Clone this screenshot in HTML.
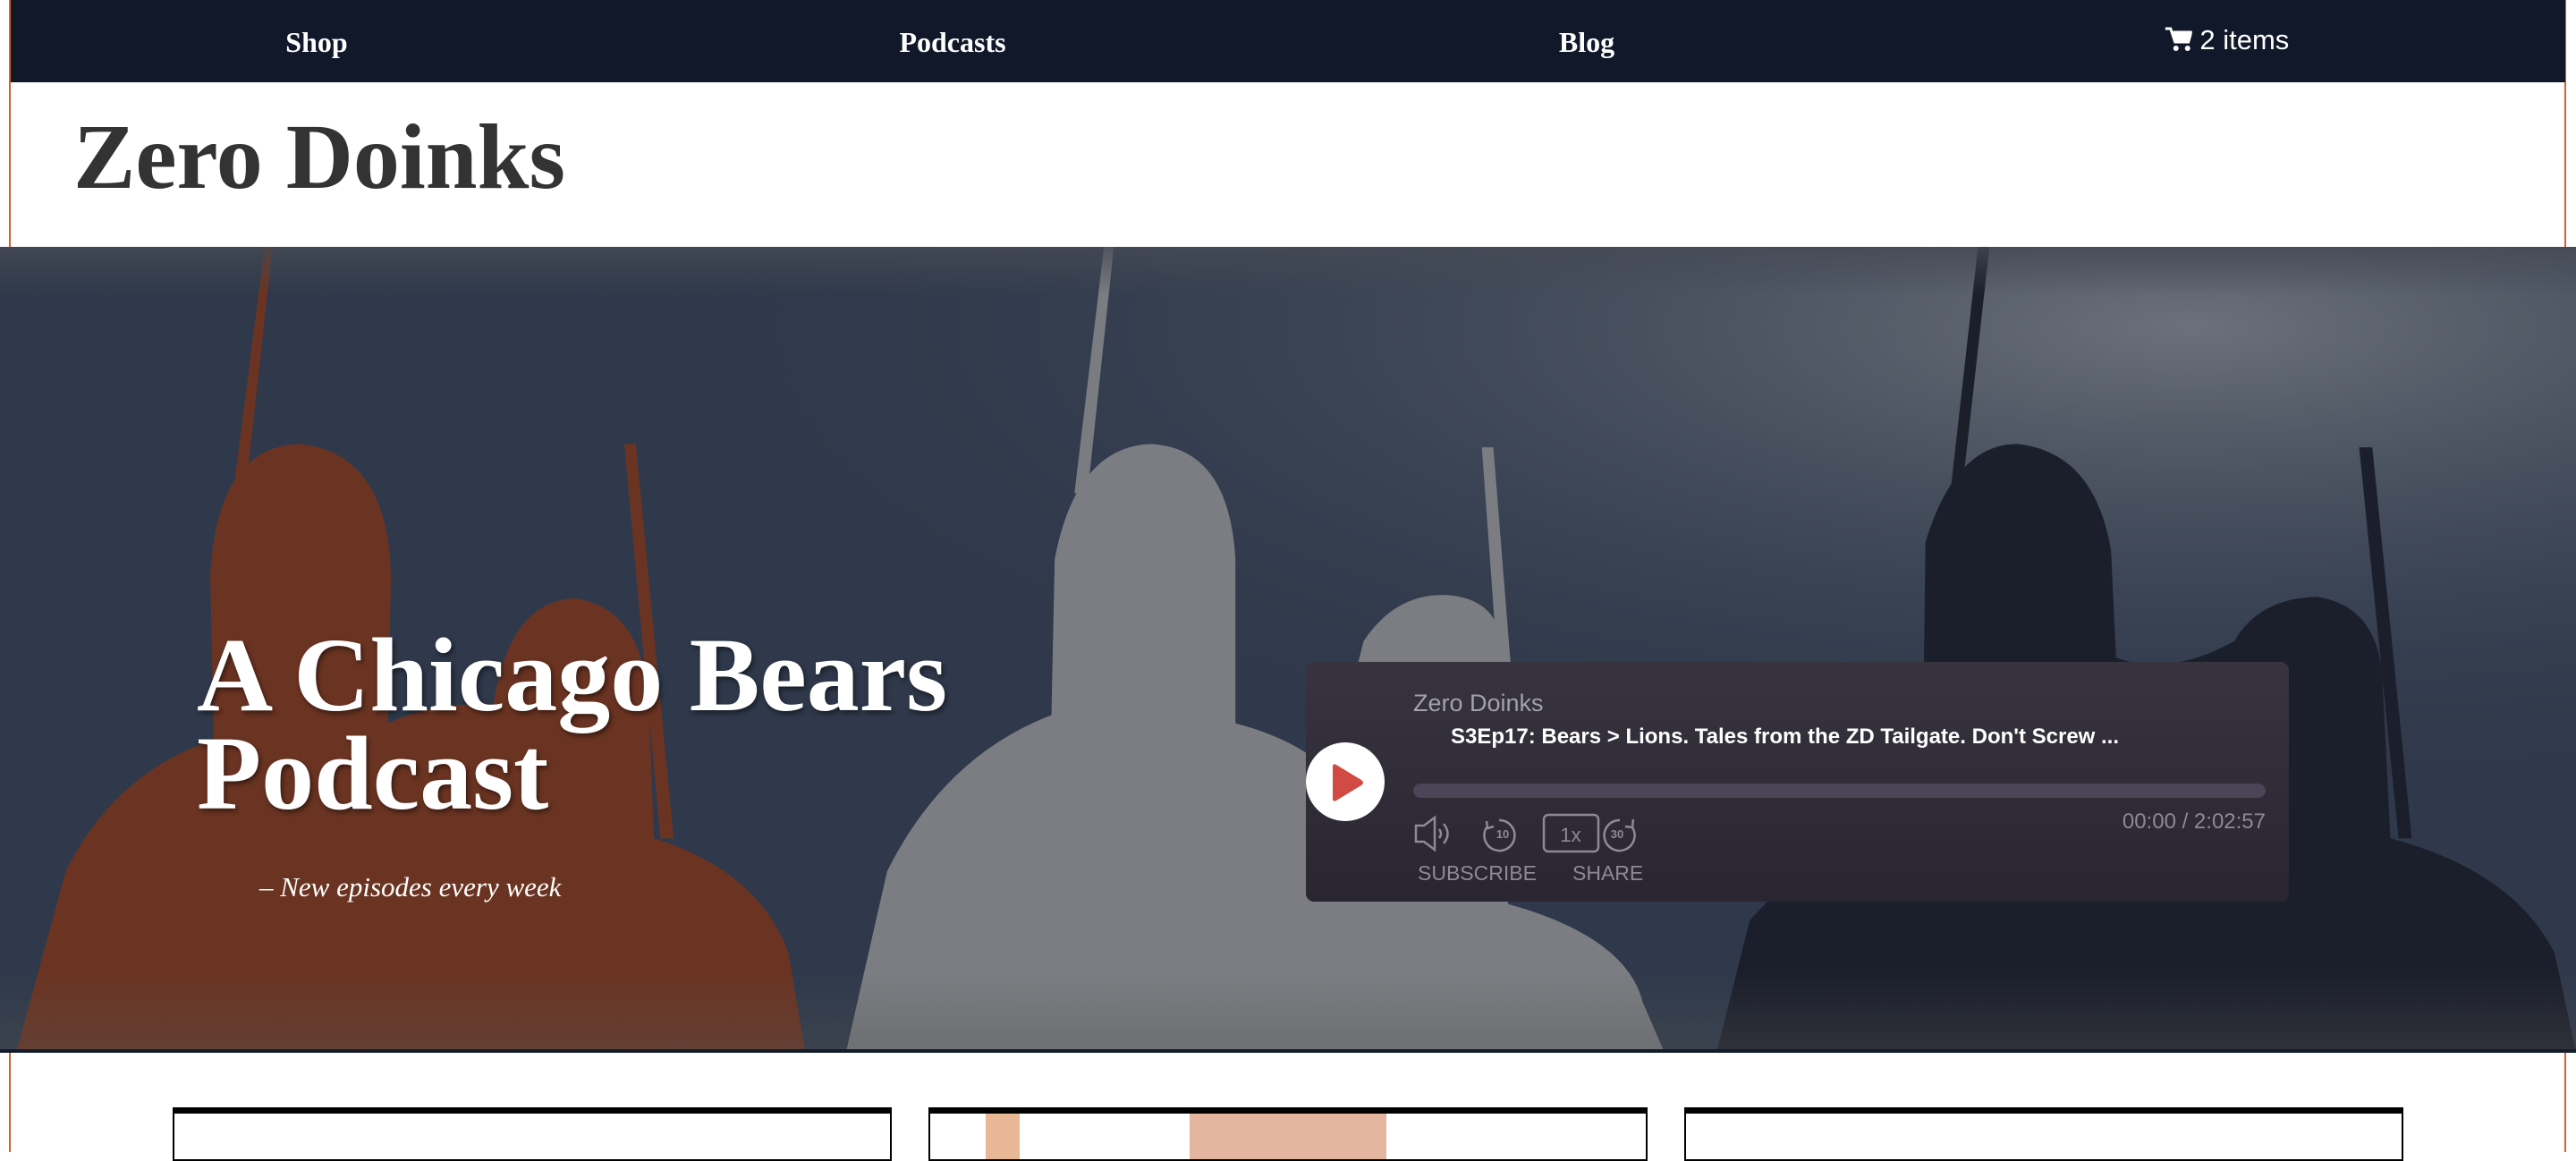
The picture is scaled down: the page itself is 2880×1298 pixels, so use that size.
<!DOCTYPE html>
<html><head><meta charset="utf-8"><style>
*{margin:0;padding:0;box-sizing:border-box}
body{width:2880px;height:1288px;overflow:hidden;background:#fff;position:relative;font-family:"Liberation Sans",sans-serif}
.vl{position:absolute;top:0;width:2px;height:1288px;background:#d4622a}
nav{position:absolute;left:12px;top:0;width:2856px;height:92px;background:#101829}
nav span{position:absolute;top:29px;color:#fff;font-family:"Liberation Serif",serif;font-weight:bold;font-size:32px;transform:translateX(-50%)}
.logo{position:absolute;left:82px;top:124px;font-family:"Liberation Serif",serif;font-weight:bold;font-size:104px;color:#333;letter-spacing:0px;line-height:1}
.hero{position:absolute;left:0;top:276px;width:2880px;height:900px;overflow:hidden;background:#2f394b}
.title{position:absolute;left:220px;top:424px;font-family:"Liberation Serif",serif;font-weight:bold;font-size:118px;line-height:110px;color:#fff;text-shadow:2px 3px 6px rgba(0,0,0,.5)}
.sub{position:absolute;left:290px;top:698px;font-family:"Liberation Serif",serif;font-style:italic;font-size:31px;color:#fff}
.player{position:absolute;left:1460px;top:740px;width:1099px;height:268px;border-radius:9px;background:linear-gradient(#37333f,#2a2631);color:#a19fa8}
.card{position:absolute;top:1238px;width:804px;height:60px;border:2px solid #000;border-top:7px solid #000;background:#fff}
</style></head><body>
<div class="vl" style="left:10px"></div><div class="vl" style="left:2867px"></div>
<nav>
<span style="left:342px">Shop</span>
<span style="left:1053px">Podcasts</span>
<span style="left:1762px">Blog</span>
<span style="left:2478px;font-family:'Liberation Sans',sans-serif;font-weight:normal;font-size:31px;top:27px"><svg width="30" height="28" viewBox="0 0 30 28" style="vertical-align:-3px"><path d="M0 2h6l5 15h15l3-11H9" fill="none" stroke="#fff" stroke-width="3"/><path d="M8 5h21l-3 12H12z" fill="#fff"/><circle cx="12" cy="24" r="3" fill="#fff"/><circle cx="25" cy="24" r="3" fill="#fff"/></svg> 2 items</span>
</nav>
<div class="logo">Zero Doinks</div>
<div class="hero">
<svg width="2880" height="900" viewBox="0 0 1568 490" preserveAspectRatio="none" style="position:absolute;left:0;top:0">
<defs>
<radialGradient id="g1" cx="0.85" cy="0.1" r="0.6"><stop offset="0" stop-color="#7a7f86" stop-opacity=".8"/><stop offset="1" stop-color="#2f394b" stop-opacity="0"/></radialGradient>
<linearGradient id="g2" x1="0" y1="0" x2="0" y2="1"><stop offset="0" stop-color="#454a55" stop-opacity=".8"/><stop offset=".06" stop-color="#454a55" stop-opacity="0"/><stop offset=".9" stop-color="#555" stop-opacity="0"/><stop offset="1" stop-color="#555" stop-opacity=".35"/></linearGradient>
</defs>
<rect width="1568" height="490" fill="#2f394b"/>
<rect width="1568" height="490" fill="url(#g1)"/>
<path d="M161,0 L166,0 L146,180 L138,180Z" fill="#6a3322"/>
<path d="M10,490 L40,380 Q70,320 130,300 L128,200 Q132,122 182,120 Q236,125 238,200 L236,290 Q270,275 300,280 Q310,215 350,214 Q392,220 395,280 L398,360 Q462,380 480,430 L490,490 Z" fill="#6b3422"/>
<path d="M380,120 L387,120 L410,360 L402,360Z" fill="#6b3422"/>
<path d="M672,0 L678,0 L662,150 L654,150Z" fill="#7a7c82"/>
<path d="M515,490 L540,380 Q575,310 640,285 L642,190 Q655,122 700,120 Q748,122 752,190 L752,290 Q790,300 810,320 L830,240 Q850,210 882,212 Q915,215 915,250 L918,400 Q990,420 1000,460 L1013,490 Z" fill="#7b7d82"/>
<path d="M902,122 L909,122 L920,260 L912,260Z" fill="#7b7d82"/>
<path d="M1204,0 L1211,0 L1193,160 L1186,160Z" fill="#1b1f2a"/>
<path d="M1045,490 L1065,410 Q1110,360 1170,340 L1172,180 Q1190,120 1228,120 Q1275,125 1285,185 L1288,250 Q1320,262 1360,240 Q1375,214 1410,213 Q1446,218 1450,260 L1455,360 Q1530,380 1555,430 L1568,490 Z" fill="#1b1f2b"/>
<path d="M1436,122 L1444,122 L1468,360 L1460,360Z" fill="#1b1f2b"/>
<rect width="1568" height="490" fill="url(#g2)"/>
</svg>
<div class="title">A Chicago Bears<br>Podcast</div>
<div class="sub">– New episodes every week</div>
</div>
<div style="position:absolute;left:0;top:1173px;width:2880px;height:4px;background:#141c2c"></div>
<div class="player">
<div style="position:absolute;left:0;top:90px;width:88px;height:88px;border-radius:50%;background:#fff"></div>
<svg style="position:absolute;left:26px;top:113px" width="40" height="44" viewBox="0 0 40 44"><path d="M4 4 Q4 0 8 2 L36 19 Q40 22 36 25 L8 42 Q4 44 4 40Z" fill="#d24a44"/></svg>
<div style="position:absolute;left:120px;top:31px;font-size:27px;color:#a3a1aa">Zero Doinks</div>
<div style="position:absolute;left:162px;top:70px;font-size:24px;font-weight:bold;color:#fff">S3Ep17: Bears &gt; Lions. Tales from the ZD Tailgate. Don't Screw ...</div>
<div style="position:absolute;left:120px;top:136px;width:953px;height:16px;border-radius:8px;background:#4a4557"></div>
<svg style="position:absolute;left:120px;top:168px" width="260" height="50" viewBox="0 0 260 50" fill="none" stroke="#8d8a93" stroke-width="2.5">
<path d="M3 15h9l12-9v36l-12-9H3z"/><path d="M29 19q4 5 0 10M34 13q9 11 0 22"/>
<path d="M96 9a17 17 0 1 1-14 8"/><path d="M82 10l1 8 7-2"/>
<text x="100" y="29" fill="#8d8a93" stroke="none" font-size="13" font-weight="bold" text-anchor="middle" font-family="Liberation Sans">10</text>
<rect x="146" y="3" width="61" height="41" rx="5"/>
<text x="176" y="33" fill="#8d8a93" stroke="none" font-size="22" text-anchor="middle" font-family="Liberation Sans">1x</text>
<path d="M245 17a17 17 0 1 1-14-8"/><path d="M246 8l-1 9-8-1"/>
<text x="228" y="29" fill="#8d8a93" stroke="none" font-size="13" font-weight="bold" text-anchor="middle" font-family="Liberation Sans">30</text>
</svg>
<div style="position:absolute;right:26px;top:165px;font-size:24px;color:#8d8a93">00:00 / 2:02:57</div>
<div style="position:absolute;left:125px;top:223px;font-size:23px;color:#8d8a93">SUBSCRIBE</div>
<div style="position:absolute;left:298px;top:223px;font-size:23px;color:#8d8a93">SHARE</div>
</div>
<div class="card" style="left:193px"></div>
<div class="card" style="left:1038px;overflow:hidden"><div style="position:absolute;left:62px;top:0;width:38px;height:60px;background:#e8b896;border-radius:0 0 10px 10px"></div><div style="position:absolute;left:290px;top:0;width:220px;height:60px;background:#e4b59f"></div></div>
<div class="card" style="left:1883px"></div>
</body></html>
